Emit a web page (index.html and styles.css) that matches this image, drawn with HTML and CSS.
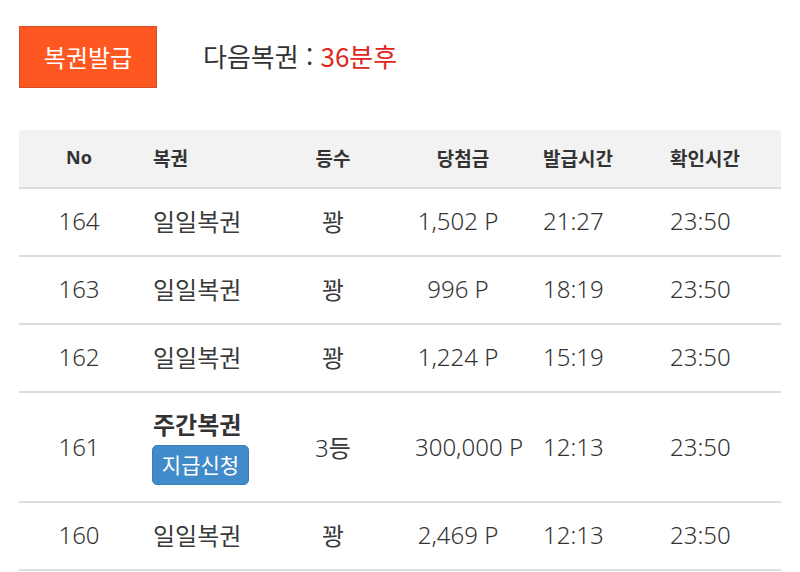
FILE: index.html
```html
<!DOCTYPE html>
<html lang="ko">
<head>
<meta charset="utf-8">
<link rel="stylesheet" href="styles.css">
</head>
<body>
<div class="page">
  <div class="top">
    <button class="issue-btn">복권발급</button>
    <div class="next">다음복권 : <span class="red">36분후</span></div>
  </div>
  <div class="table">
    <div class="row head">
      <div class="c-no">No</div>
      <div class="c-name">복권</div>
      <div class="c-rank">등수</div>
      <div class="c-prize"><span class="box">당첨금</span></div>
      <div class="c-issue">발급시간</div>
      <div class="c-check">확인시간</div>
    </div>
    <div class="row">
      <div class="c-no">164</div>
      <div class="c-name">일일복권</div>
      <div class="c-rank">꽝</div>
      <div class="c-prize"><span class="box">1,502 P</span></div>
      <div class="c-issue">21:27</div>
      <div class="c-check">23:50</div>
    </div>
    <div class="row">
      <div class="c-no">163</div>
      <div class="c-name">일일복권</div>
      <div class="c-rank">꽝</div>
      <div class="c-prize"><span class="box">996 P</span></div>
      <div class="c-issue">18:19</div>
      <div class="c-check">23:50</div>
    </div>
    <div class="row">
      <div class="c-no">162</div>
      <div class="c-name">일일복권</div>
      <div class="c-rank">꽝</div>
      <div class="c-prize"><span class="box">1,224 P</span></div>
      <div class="c-issue">15:19</div>
      <div class="c-check">23:50</div>
    </div>
    <div class="row tall">
      <div class="c-no">161</div>
      <div class="c-name stack">
        <div class="bold">주간복권</div>
        <span class="badge">지급신청</span>
      </div>
      <div class="c-rank"><span class="num">3</span>등</div>
      <div class="c-prize"><span class="box">300,000 P</span></div>
      <div class="c-issue">12:13</div>
      <div class="c-check">23:50</div>
    </div>
    <div class="row">
      <div class="c-no">160</div>
      <div class="c-name">일일복권</div>
      <div class="c-rank">꽝</div>
      <div class="c-prize"><span class="box">2,469 P</span></div>
      <div class="c-issue">12:13</div>
      <div class="c-check">23:50</div>
    </div>
  </div>
</div>
</body>
</html>
```

FILE: styles.css
```css
* { box-sizing: border-box; }
html, body { margin: 0; padding: 0; background: #fff; overflow: hidden; }
body {
  font-family: "Noto Sans", "Noto Sans CJK KR", sans-serif;
  color: #333;
}
.page { padding: 26px 19px 0 19px; width: 800px; }
.top { display: flex; align-items: center; height: 62px; }
.issue-btn {
  width: 138px; height: 62px;
  background: #ff5722;
  border: 1px solid #d2502a;
  color: #fff;
  font-family: "Noto Sans CJK KR", sans-serif;
  font-size: 24px;
  padding: 0 0 2px 0;
  margin: 0;
}
.next {
  margin-left: 46px;
  font-family: "Noto Sans CJK KR", "Noto Sans", sans-serif;
  font-size: 26px;
  color: #333;
  margin-top: -4px;
}
.red { color: #e1261c; }
.table { margin-top: 42px; width: 762px; }
.row {
  display: grid;
  grid-template-columns: 120px 155px 78px 171px 127px 111px;
  align-items: center;
  height: 68px;
  border-bottom: 2px solid #dddddd;
  font-size: 24px;
  font-family: "Noto Sans", "Noto Sans CJK KR", sans-serif;
  font-weight: 300;
  color: #333;
  padding-bottom: 3px;
}
.row.head {
  height: 59px;
  background: #f2f2f2;
  font-weight: bold;
  font-size: 19px;
  font-family: "Noto Sans CJK KR", "Noto Sans", sans-serif;
  color: #333;
  padding-bottom: 3px;
}
.row.tall { height: 110px; padding-bottom: 2px; }
.c-no { text-align: center; }
.c-name { padding-left: 14px; font-family: "Noto Sans CJK KR", sans-serif; font-weight: 400; color: #3a3a3a; }
.c-rank { text-align: center; font-family: "Noto Sans CJK KR", sans-serif; font-weight: 400; color: #3a3a3a; }
.c-rank .num { font-family: "Noto Sans", sans-serif; font-weight: 300; color: #333; }
.c-prize { padding-left: 43px; }
.c-prize .box { display: block; width: 86px; text-align: center; white-space: nowrap; }
.head .c-prize { padding-left: 48px; }
.head .c-name, .head .c-rank { font-weight: bold; color: #333; }
.c-issue, .c-check { text-align: left; }
.head .c-no { font-family: "Noto Sans", sans-serif; font-size: 18px; }
.stack { display: flex; flex-direction: column; align-items: flex-start; }
.stack .bold { font-weight: bold; font-size: 24px; line-height: 32px; color: #333; }
.badge {
  margin-top: 5px;
  margin-left: -1px;
  width: 97px; height: 40px;
  background: #428bca;
  border: 1px solid #3a7dbb;
  border-radius: 5px;
  color: #fff;
  font-size: 21px;
  font-weight: 400;
  display: flex; align-items: center; justify-content: center;
  padding-bottom: 2px;
}
```
